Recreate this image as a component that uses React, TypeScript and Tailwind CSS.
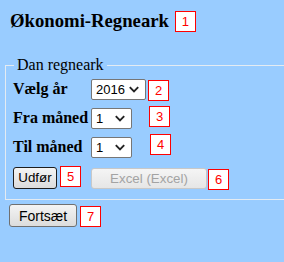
import React from "react";

const Mark = ({ n, className = "" }: { n: number; className?: string }) => (
  <div
    className={`w-[21px] h-[21px] shrink-0 bg-white border border-[#ff0000] text-[#ff0000] flex items-center justify-center text-[13px] leading-none font-['Liberation_Sans',Arial,sans-serif] ${className}`}
  >
    {n}
  </div>
);

const Chevron = () => (
  <svg width="10" height="7" viewBox="0 0 10 7" className="shrink-0">
    <path d="M0.8 1.2 L5 5.4 L9.2 1.2" fill="none" stroke="#222" strokeWidth="1.9" />
  </svg>
);

const FakeSelect = ({ value, width, className = "" }: { value: string; width: string; className?: string }) => (
  <div
    className={`${width} h-[21px] shrink-0 bg-white border border-[#767676] rounded-[2px] flex items-center justify-between pl-[4px] pr-[6px] text-[13px] text-black font-['Liberation_Sans',Arial,sans-serif] ${className}`}
  >
    <span>{value}</span>
    <Chevron />
  </div>
);

export default function App() {
  return (
    <div className="w-full min-h-screen overflow-hidden bg-[#99ccff] text-black font-['Liberation_Serif','Times_New_Roman',serif]">
      {/* Title */}
      <div className="flex items-start pt-[10px] pl-[10px]">
        <h1 className="text-[18.72px] font-bold leading-[21px]">Økonomi-Regneark</h1>
        <Mark n={1} className="ml-[6px] mt-[1px]" />
      </div>

      {/* Dan regneark */}
      <fieldset className="ml-[5px] mt-[24px] w-[300px] border border-[#e4ebf2] pl-[7px] pt-[4px] pb-[9px]">
        <legend className="ml-[1px] px-[3px] text-[16px] leading-[18px] font-['Liberation_Serif','Times_New_Roman',serif]">
          Dan regneark
        </legend>

        <div className="flex items-start h-[29px]">
          <span className="w-[78px] text-[16px] font-bold leading-[21px]">Vælg år</span>
          <FakeSelect value="2016" width="w-[55px]" className="mt-[1px]" />
          <Mark n={2} className="ml-[2px] mt-[2px]" />
        </div>

        <div className="flex items-start h-[29px]">
          <span className="w-[78px] text-[16px] font-bold leading-[21px]">Fra måned</span>
          <FakeSelect value="1" width="w-[41px]" className="mt-[1px]" />
          <Mark n={3} className="ml-[17px] -mt-[1px]" />
        </div>

        <div className="flex items-start h-[30px]">
          <span className="w-[78px] text-[16px] font-bold leading-[21px]">Til måned</span>
          <FakeSelect value="1" width="w-[41px]" className="mt-[1px]" />
          <Mark n={4} className="ml-[18px] -mt-[2px]" />
        </div>

        <div className="flex items-start font-['Liberation_Sans',Arial,sans-serif]">
          <button className="mt-[1px] w-[44px] h-[22px] rounded-[3px] border border-[#1e1e1e] bg-gradient-to-b from-[#f4f4f4] to-[#dcdcdc] text-[13.33px] leading-none text-black">
            Udfør
          </button>
          <Mark n={5} className="ml-[3px]" />
          <button
            disabled
            className="ml-[10px] mt-[2px] w-[116px] h-[21px] rounded-[3px] border border-[#c8c8c8] bg-gradient-to-b from-[#f5f5f5] to-[#e6e6e6] text-[13.33px] leading-none text-[#a3a3a3]"
          >
            Excel (Excel)
          </button>
          <Mark n={6} className="ml-[1px] mt-[3px]" />
        </div>
      </fieldset>

      {/* Fortsæt */}
      <div className="flex items-start pl-[9px] mt-[4px] font-['Liberation_Sans',Arial,sans-serif]">
        <button className="w-[68px] h-[23px] rounded-[3px] border border-[#707070] bg-gradient-to-b from-[#f4f4f4] to-[#dcdcdc] text-[14px] leading-none text-black">
          Fortsæt
        </button>
        <Mark n={7} className="ml-[3px] mt-[2px]" />
      </div>
    </div>
  );
}
